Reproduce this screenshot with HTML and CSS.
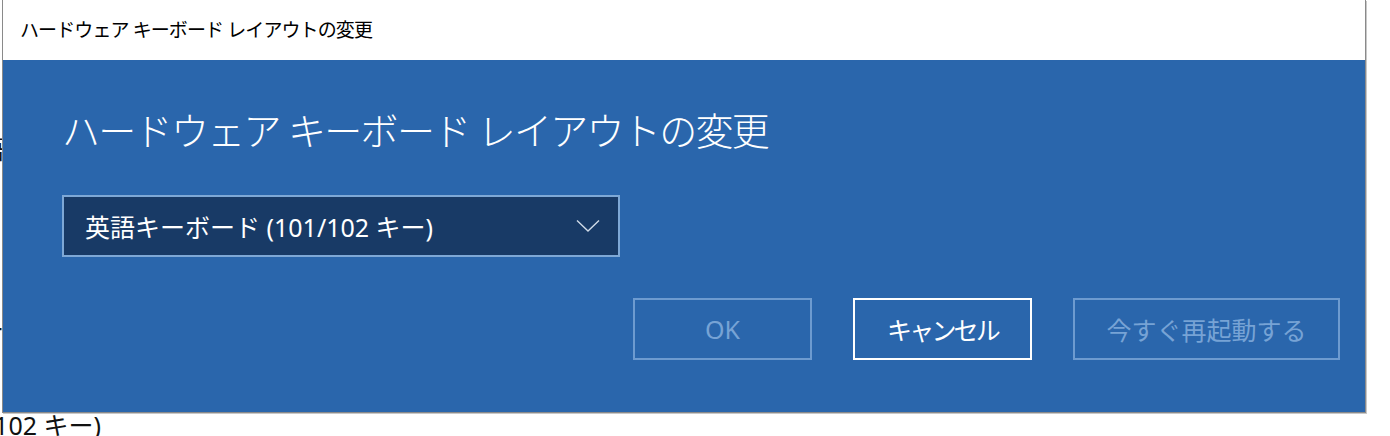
FILE: index.html
```html
<!DOCTYPE html>
<html lang="ja">
<head>
<meta charset="utf-8">
<title>ハードウェア キーボード レイアウトの変更</title>
<link rel="stylesheet" href="styles.css">
</head>
<body>
  <div class="backdrop">
    <div class="bg-line bg-line-1">言語</div>
    <div class="bg-line bg-line-2">ー</div>
    <div class="bg-line bg-line-3">(101/102 キー)</div>
  </div>

  <div class="window">
    <div class="titlebar">ハードウェア キーボード レイアウトの変更</div>
    <div class="content">
      <h1 class="heading">ハードウェア キーボード レイアウトの変更</h1>
      <div class="select">
        <span class="select-text">英語キーボード (101/102 キー)</span>
        <svg class="chevron" width="24" height="14" viewBox="0 0 24 14" aria-hidden="true">
          <polyline points="1,1.5 12,12 23,1.5" fill="none" stroke="#d0dbe8" stroke-width="1.4"/>
        </svg>
      </div>
      <div class="buttons">
        <button class="btn btn-disabled">OK</button>
        <button class="btn btn-primary btn-kana">キャンセル</button>
        <button class="btn btn-disabled btn-wide">今すぐ再起動する</button>
      </div>
    </div>
  </div>
</body>
</html>
```

FILE: styles.css
```css
html, body {
  margin: 0;
  padding: 0;
  background: #ffffff;
  width: 1390px;
  height: 436px;
  overflow: hidden;
  font-family: "Noto Sans", "Noto Sans CJK JP", sans-serif;
}

body {
  position: relative;
}

.backdrop {
  position: relative;
  height: 436px;
  color: #111;
  font-size: 25px;
}

.bg-line {
  position: absolute;
  white-space: nowrap;
  line-height: 30px;
}

.bg-line-1 { top: 134px; right: 1386px; }
.bg-line-2 { top: 314px; right: 1386px; }
.bg-line-3 { top: 410px; right: 1289px; }

.window {
  position: absolute;
  top: 0;
  left: 2px;
  width: 1362px;
  height: 412px;
  border: 1px solid #8a8a8a;
  border-top: none;
  box-shadow: 1px 1px 0 #c8c8c8;
  display: flex;
  flex-direction: column;
  background: #2a66ac;
}

.titlebar {
  height: 60px;
  flex: none;
  background: #ffffff;
  color: #000;
  font-size: 19px;
  letter-spacing: -0.9px;
  line-height: 60px;
  padding-left: 17px;
  white-space: nowrap;
}

.content {
  flex: 1;
  padding: 42px 25px 0 59px;
  display: flex;
  flex-direction: column;
}

.heading {
  margin: 0;
  font-weight: 300;
  font-size: 38px;
  letter-spacing: -1.7px;
  line-height: 56px;
  color: #ffffff;
  white-space: nowrap;
}

.select {
  margin-top: 37px;
  width: 558px;
  height: 62px;
  box-sizing: border-box;
  border: 2px solid #7ea8d6;
  background: #183a66;
  display: flex;
  align-items: center;
  justify-content: space-between;
  padding: 0 18px 0 21px;
  color: #ffffff;
  font-size: 25px;
}

.chevron {
  display: block;
}

.buttons {
  margin-top: 41px;
  display: flex;
  justify-content: flex-end;
  gap: 41px;
}

.btn {
  width: 179px;
  height: 62px;
  box-sizing: border-box;
  background: transparent;
  font-family: inherit;
  font-size: 25px;
  padding: 0;
  cursor: default;
}

.btn-kana {
  letter-spacing: -2.8px;
}

.btn-wide {
  width: 267px;
}

.btn-disabled {
  border: 2px solid #6d9bd0;
  color: #77a3d5;
}

.btn-primary {
  border: 2px solid #ffffff;
  color: #ffffff;
}
```
